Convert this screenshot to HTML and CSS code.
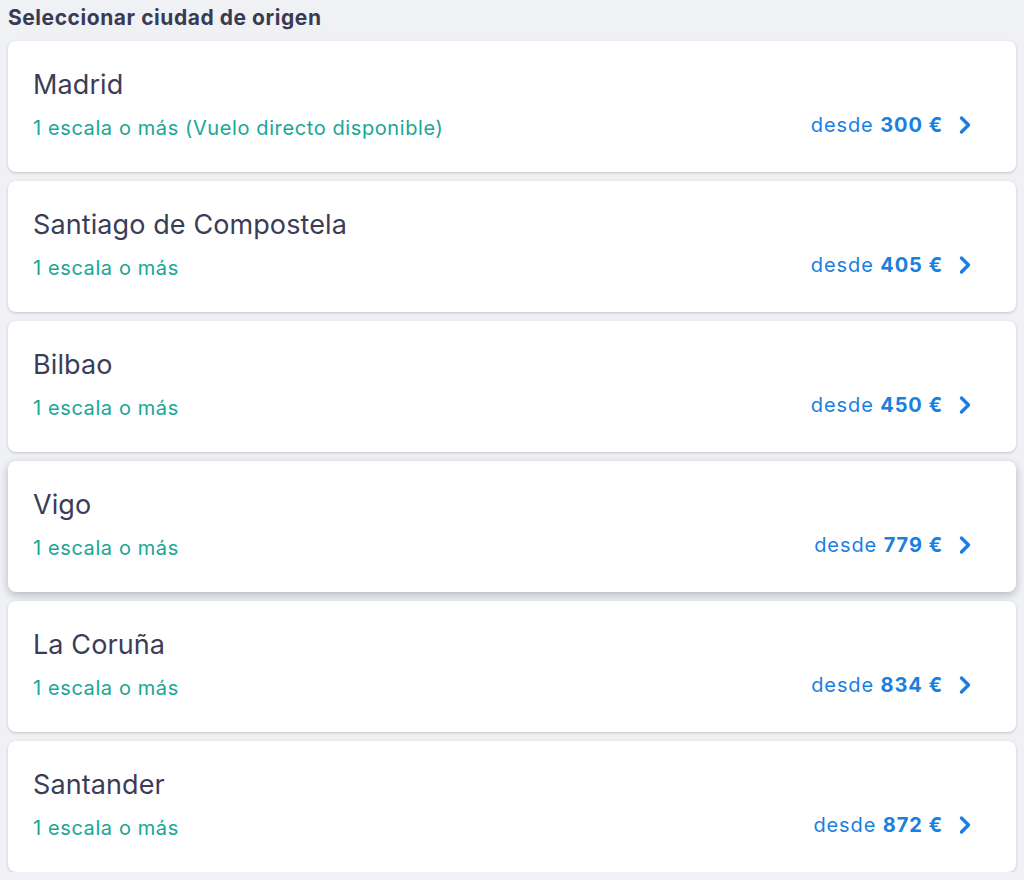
FILE: index.html
```html
<!DOCTYPE html>
<html lang="es">
<head>
<meta charset="utf-8">
<title>Seleccionar ciudad de origen</title>
<link rel="stylesheet" href="styles.css">
</head>
<body>
<main class="page">
  <h1 class="title">Seleccionar ciudad de origen</h1>
  <ul class="list">
    <li class="card">
      <div class="info"><div class="city">Madrid</div><div class="stops">1 escala o más (Vuelo directo disponible)</div></div>
      <div class="price">desde <b>300 €</b><svg class="chev" viewBox="0 0 14 20"><path d="M3.5 3l7 7-7 7" /></svg></div>
    </li>
    <li class="card">
      <div class="info"><div class="city">Santiago de Compostela</div><div class="stops">1 escala o más</div></div>
      <div class="price">desde <b>405 €</b><svg class="chev" viewBox="0 0 14 20"><path d="M3.5 3l7 7-7 7" /></svg></div>
    </li>
    <li class="card">
      <div class="info"><div class="city">Bilbao</div><div class="stops">1 escala o más</div></div>
      <div class="price">desde <b>450 €</b><svg class="chev" viewBox="0 0 14 20"><path d="M3.5 3l7 7-7 7" /></svg></div>
    </li>
    <li class="card card-hover">
      <div class="info"><div class="city">Vigo</div><div class="stops">1 escala o más</div></div>
      <div class="price">desde <b>779 €</b><svg class="chev" viewBox="0 0 14 20"><path d="M3.5 3l7 7-7 7" /></svg></div>
    </li>
    <li class="card">
      <div class="info"><div class="city">La Coruña</div><div class="stops">1 escala o más</div></div>
      <div class="price">desde <b>834 €</b><svg class="chev" viewBox="0 0 14 20"><path d="M3.5 3l7 7-7 7" /></svg></div>
    </li>
    <li class="card">
      <div class="info"><div class="city">Santander</div><div class="stops">1 escala o más</div></div>
      <div class="price">desde <b>872 €</b><svg class="chev" viewBox="0 0 14 20"><path d="M3.5 3l7 7-7 7" /></svg></div>
    </li>
  </ul>
</main>
</body>
</html>
```
FILE: styles.css
```css
* { box-sizing: border-box; }
html, body { margin: 0; padding: 0; background: #f0f1f5; }
body { font-family: Inter, "Noto Sans", "Liberation Sans", sans-serif; color: #3b3d58; }
.page { padding: 6px 8px 0 8px; }
.title {
  margin: 0 0 11px 0;
  font-size: 21px;
  line-height: 24px;
  font-weight: 700;
  color: #393b54;
  letter-spacing: 0.55px;
}
.list { list-style: none; margin: 0; padding: 0; display: flex; flex-direction: column; gap: 9px; }
.card {
  background: #fff;
  border-radius: 8px;
  box-shadow: 0 1px 3px rgba(30, 35, 60, 0.22);
  height: 131px;
  padding: 28px 44px 0 25px;
  display: flex;
  justify-content: space-between;
}
.card-hover { box-shadow: 0 3px 8px rgba(30, 35, 60, 0.28); }
.info { display: flex; flex-direction: column; gap: 15px; }
.city { font-size: 27px; line-height: 32px; font-weight: 400; color: #3b3d58; letter-spacing: 0.1px; }
.stops { font-size: 20px; line-height: 24px; color: #1aa597; letter-spacing: 0.6px; }
.price {
  margin-top: 44px;
  height: 24px;
  display: flex;
  align-items: center;
  font-size: 20px;
  color: #1a7fe0;
  letter-spacing: 0.9px;
  white-space: pre;
}
.price b { font-weight: 700; }
.chev { width: 14px; height: 20px; margin-left: 15px; }
.chev path { fill: none; stroke: #1a7fe0; stroke-width: 3.4; stroke-linecap: round; stroke-linejoin: round; }
```
